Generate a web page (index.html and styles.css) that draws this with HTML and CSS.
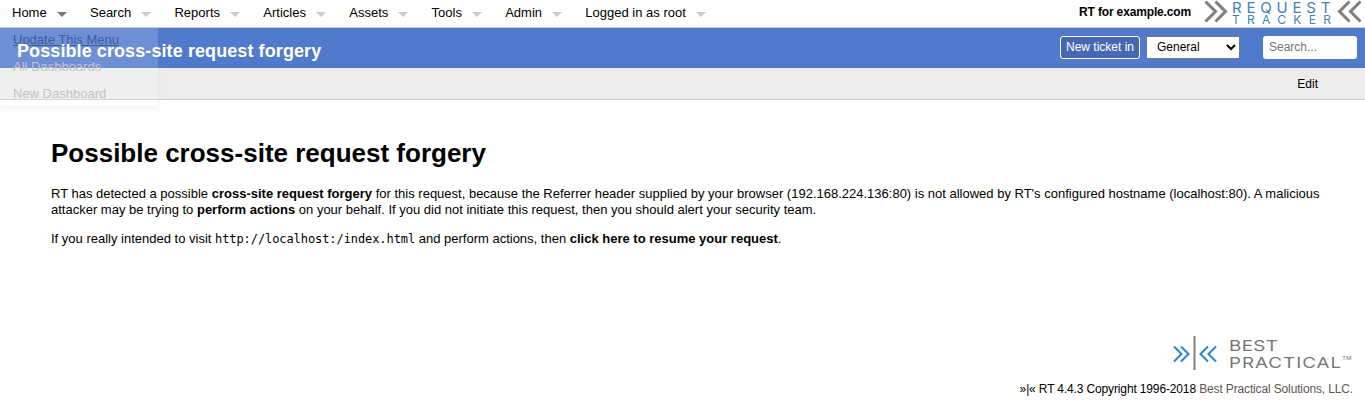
FILE: index.html
```html
<!DOCTYPE html>
<html lang="en">

<head>
  <meta charset="UTF-8">
  <meta name="viewport" content="width=device-width, initial-scale=1.0">
  <title>Possible cross-site request forgery</title>
  <link rel="stylesheet" href="styles.css">
</head>

<body>
  <div class="topbar">
    <ul class="menu">
      <li class="active">Home</li>
      <li>Search</li>
      <li>Reports</li>
      <li>Articles</li>
      <li>Assets</li>
      <li>Tools</li>
      <li>Admin</li>
      <li>Logged in as root</li>
    </ul>
    <div class="brand">
      <span class="org">RT for example.com</span>
      <div class="rt-logo">
        <svg width="24" height="24" viewBox="0 0 24 24">
          <path d="M1.5 1.5 L11.5 11.5 L1.5 21.5 M11.5 1.5 L21.5 11.5 L11.5 21.5" fill="none" stroke="#7f7f7f" stroke-width="3"/>
        </svg>
        <div class="rt-name">
          <span class="rt-request">REQUEST</span>
          <span class="rt-tracker">TRACKER</span>
        </div>
        <svg width="26" height="24" viewBox="0 0 26 24">
          <path d="M12.5 1.5 L2.5 11.5 L12.5 21.5 M23.5 1.5 L13.5 11.5 L23.5 21.5" fill="none" stroke="#7f7f7f" stroke-width="3"/>
        </svg>
      </div>
    </div>
  </div>

  <div class="header">
    <h1>Possible cross-site request forgery</h1>
    <form class="header-tools">
      <button type="button" class="new-ticket">New ticket in</button>
      <select class="queue">
        <option>General</option>
      </select>
      <input class="search" type="text" placeholder="Search...">
    </form>
  </div>

  <div class="subbar">
    <span class="edit">Edit</span>
  </div>

  <div class="dropdown">
    <a class="update" href="#">Update This Menu</a>
    <a href="#">All Dashboards</a>
    <a href="#">New Dashboard</a>
  </div>

  <div class="content">
    <h2>Possible cross-site request forgery</h2>
    <p>RT has detected a possible <b>cross-site request forgery</b> for this request, because the Referrer header supplied by your browser (192.168.224.136:80) is not allowed by RT's configured hostname (localhost:80). A malicious attacker may be trying to <b>perform actions</b> on your behalf. If you did not initiate this request, then you should alert your security team.</p>
    <p>If you really intended to visit <code>http://localhost:/index.html</code> and perform actions, then <b>click here to resume your request</b>.</p>
  </div>

  <div class="footer">
    <div class="bp-logo">
      <svg width="46" height="34" viewBox="0 0 46 34">
        <path d="M1 10.5 L8.5 18 L1 25.5 M8 10.5 L15.5 18 L8 25.5 M35 10.5 L27.5 18 L35 25.5 M43 10.5 L35.5 18 L43 25.5" fill="none" stroke="#2b86c8" stroke-width="2"/>
        <rect x="20.5" y="0" width="2" height="34" fill="#808080"/>
      </svg>
      <div class="bp-name">
        <span class="bp-best">BEST</span>
        <span class="bp-practical">PRACTICAL<sup>TM</sup></span>
      </div>
    </div>
    <p class="copyright">»|« RT 4.4.3 Copyright 1996-2018 <a href="#">Best Practical Solutions, LLC.</a></p>
  </div>
</body>

</html>
```

FILE: styles.css
```css
html, body {
  margin: 0;
  padding: 0;
}

body {
  font-family: "Liberation Sans", Arial, sans-serif;
  font-size: 13px;
  color: #000;
  background-color: #fff;
  height: 418px;
  overflow: hidden;
  position: relative;
  display: flex;
  flex-direction: column;
}

.topbar {
  display: flex;
  justify-content: space-between;
  height: 27px;
  border-bottom: 1px solid #ccc;
  background-color: #fff;
}

.menu {
  display: flex;
  list-style: none;
  margin: 0;
  padding: 0 0 0 12px;
  line-height: 25px;
}

.menu li {
  margin-right: 23.3px;
}

.menu li::after {
  content: "";
  display: inline-block;
  margin-left: 10px;
  vertical-align: 0;
  border-left: 5px solid transparent;
  border-right: 5px solid transparent;
  border-top: 5px solid #ccc;
}

.menu li.active::after {
  border-top-color: #777;
}

.brand {
  display: flex;
  align-items: flex-start;
}

.org {
  font-size: 12px;
  font-weight: bold;
  letter-spacing: -0.15px;
  line-height: 25px;
  margin-right: 13px;
}

.rt-logo {
  display: flex;
  align-items: flex-start;
  height: 24px;
  margin-right: 2px;
}

.rt-name {
  display: flex;
  flex-direction: column;
  color: #3f83b5;
  font-family: Inter, sans-serif;
  width: 105px;
  margin: 1px 0 0 4px;
}

.rt-request {
  font-size: 15px;
  line-height: 14px;
  letter-spacing: 4.8px;
}

.rt-tracker {
  font-size: 12px;
  line-height: 9px;
  letter-spacing: 7.3px;
}

.header {
  display: flex;
  justify-content: space-between;
  align-items: center;
  height: 40px;
  background-color: #527acc;
}

.header h1 {
  position: relative;
  z-index: 2;
  margin: 6px 0 0 17px;
  color: #fff;
  font-size: 18px;
  font-weight: bold;
  letter-spacing: 0.09px;
}

.header-tools {
  display: flex;
  align-items: center;
  margin: 0 8px 2px 0;
}

.new-ticket {
  height: 23px;
  padding: 0 5px;
  border: 1px solid #fff;
  border-radius: 3px;
  background-color: #4868b4;
  color: #fff;
  font-family: inherit;
  font-size: 12px;
  margin-right: 6px;
}

.queue {
  width: 94px;
  height: 23px;
  padding-left: 6px;
  border: 1px solid #777;
  background-color: #fff;
  font-family: inherit;
  font-size: 12px;
  margin-right: 23px;
}

.search {
  width: 82px;
  height: 23px;
  padding: 0 6px;
  border: none;
  border-radius: 3px;
  font-family: inherit;
  font-size: 12px;
}

.subbar {
  display: flex;
  justify-content: flex-end;
  height: 31px;
  font-size: 12px;
  line-height: 33px;
  background-color: #ececec;
  border-bottom: 1px solid #ccc;
  padding-right: 47px;
}

.dropdown {
  position: absolute;
  z-index: 1;
  left: 0;
  top: 28px;
  width: 158px;
  height: 78px;
  box-sizing: border-box;
  padding-left: 13px;
  background-color: rgba(255, 255, 255, 0.16);
  box-shadow: 0 2px 5px rgba(0, 0, 0, 0.05);
  display: flex;
  flex-direction: column;
  gap: 4px;
}

.dropdown a {
  color: #c4c4c4;
  line-height: 23px;
  text-decoration: none;
}

.dropdown a.update {
  color: #3e5c9e;
  text-decoration: underline;
}

.content {
  padding: 38px 20px 0 51px;
}

.content h2 {
  margin: 0 0 18px;
  font-size: 26px;
  font-weight: bold;
  line-height: 30px;
}

.content p {
  margin: 0 0 13px;
  line-height: 16px;
}

.content code {
  font-family: "DejaVu Sans Mono", monospace;
  font-size: 12px;
  letter-spacing: -0.08px;
}

.footer {
  margin-top: auto;
  margin-bottom: 22px;
  padding-right: 12px;
  display: flex;
  flex-direction: column;
  align-items: flex-end;
}

.bp-logo {
  display: flex;
  align-items: center;
  gap: 10px;
  margin-right: 2px;
}

.bp-name {
  display: flex;
  flex-direction: column;
  align-items: flex-start;
  width: 122px;
  margin-top: 3px;
  color: #777;
  font-family: Inter, sans-serif;
  font-size: 15px;
  line-height: 17px;
}

.bp-name span {
  transform: scaleX(1.25);
  transform-origin: left center;
}

.bp-best {
  letter-spacing: 0.3px;
}

.bp-practical {
  letter-spacing: 0.8px;
}

.bp-name sup {
  font-size: 5px;
  letter-spacing: 0;
  vertical-align: 8px;
  line-height: 0;
}

.copyright {
  margin: 11px 0 0;
  font-size: 12px;
  letter-spacing: -0.14px;
}

.copyright a {
  color: #62554f;
  text-decoration: none;
}
```
